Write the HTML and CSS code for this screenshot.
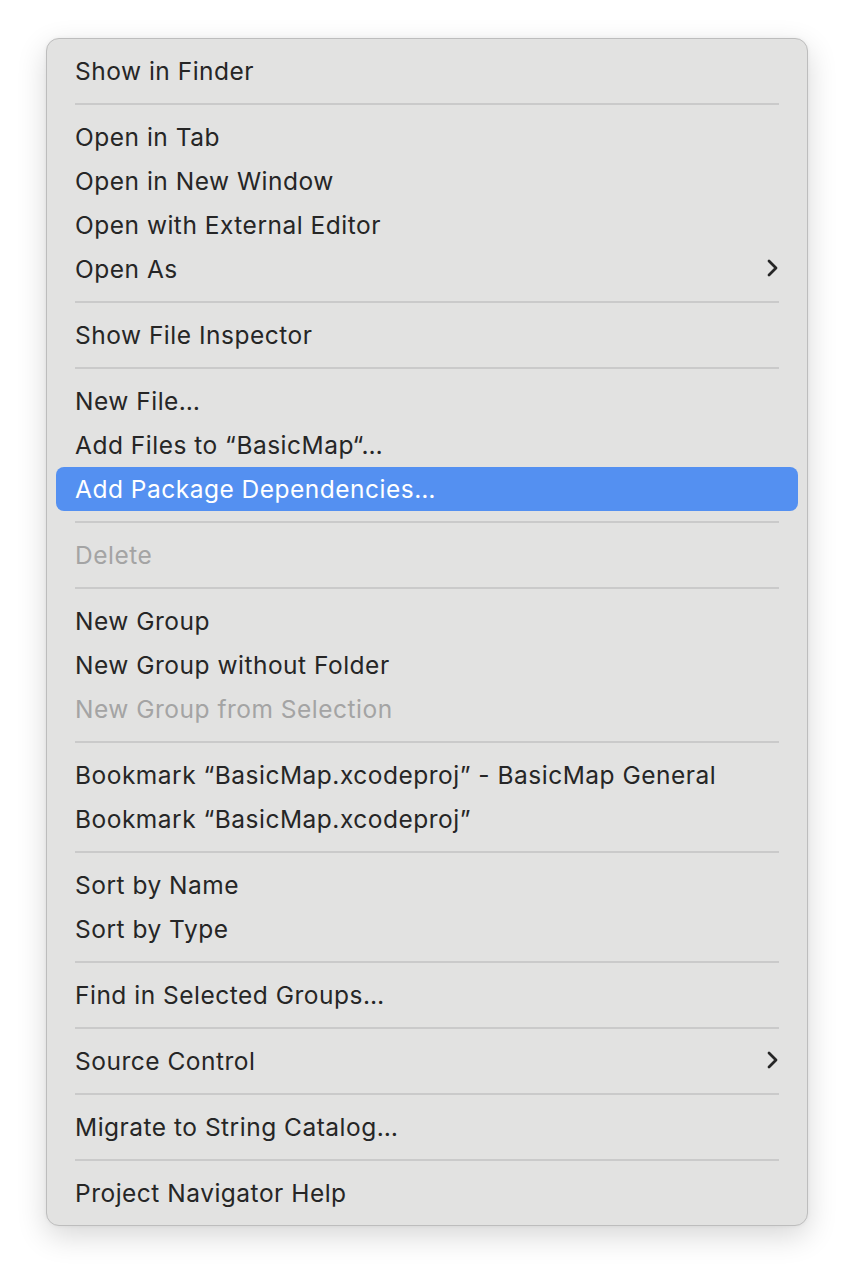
FILE: index.html
```html
<!DOCTYPE html>
<html>
<head>
<meta charset="utf-8">
<link rel="stylesheet" href="styles.css">
</head>
<body>
<div class="menu">
  <div class="item">Show in Finder</div>
  <div class="sep"></div>
  <div class="item">Open in Tab</div>
  <div class="item">Open in New Window</div>
  <div class="item">Open with External Editor</div>
  <div class="item"><span>Open As</span><svg class="chev" viewBox="0 0 12 20" width="12" height="20"><path d="M3 3 L10 10 L3 17" fill="none" stroke="#262626" stroke-width="2.8" stroke-linecap="round" stroke-linejoin="round"/></svg></div>
  <div class="sep"></div>
  <div class="item">Show File Inspector</div>
  <div class="sep"></div>
  <div class="item">New File…</div>
  <div class="item">Add Files to “BasicMap“…</div>
  <div class="item active">Add Package Dependencies…</div>
  <div class="sep"></div>
  <div class="item disabled">Delete</div>
  <div class="sep"></div>
  <div class="item">New Group</div>
  <div class="item">New Group without Folder</div>
  <div class="item disabled">New Group from Selection</div>
  <div class="sep"></div>
  <div class="item">Bookmark “BasicMap.xcodeproj” - BasicMap General</div>
  <div class="item">Bookmark “BasicMap.xcodeproj”</div>
  <div class="sep"></div>
  <div class="item">Sort by Name</div>
  <div class="item">Sort by Type</div>
  <div class="sep"></div>
  <div class="item">Find in Selected Groups…</div>
  <div class="sep"></div>
  <div class="item"><span>Source Control</span><svg class="chev" viewBox="0 0 12 20" width="12" height="20"><path d="M3 3 L10 10 L3 17" fill="none" stroke="#262626" stroke-width="2.8" stroke-linecap="round" stroke-linejoin="round"/></svg></div>
  <div class="sep"></div>
  <div class="item">Migrate to String Catalog…</div>
  <div class="sep"></div>
  <div class="item">Project Navigator Help</div>
</div>
</body>
</html>
```
FILE: styles.css
```css
html, body {
  margin: 0;
  padding: 0;
  background: #ffffff;
}
body {
  padding: 38px 46px 54px 46px;
  font-family: Inter, "Noto Sans", sans-serif;
}
.menu {
  width: 760px;
  box-sizing: content-box;
  background: #e2e2e1;
  border: 1px solid #bdbdbd;
  border-radius: 13px;
  padding: 10px 0;
  box-shadow: 0 10px 30px rgba(0,0,0,0.16), 0 0 4px rgba(0,0,0,0.05);
}
.item {
  height: 44px;
  margin: 0 9px;
  padding: 0 19px 0 19px;
  box-sizing: border-box;
  display: flex;
  align-items: center;
  justify-content: space-between;
  font-size: 24.5px;
  color: #262626;
  border-radius: 8px;
  letter-spacing: 0.5px;
}
.item.active {
  background: #5490f1;
  color: #ffffff;
}
.item.disabled {
  color: #a4a4a4;
}
.chev {
  margin-right: 1px;
  margin-bottom: 2px;
}
.sep {
  height: 22px;
  display: flex;
  align-items: center;
  padding: 0 28px;
}
.sep::before {
  content: "";
  display: block;
  width: 100%;
  height: 2px;
  background: #cacaca;
}
```
